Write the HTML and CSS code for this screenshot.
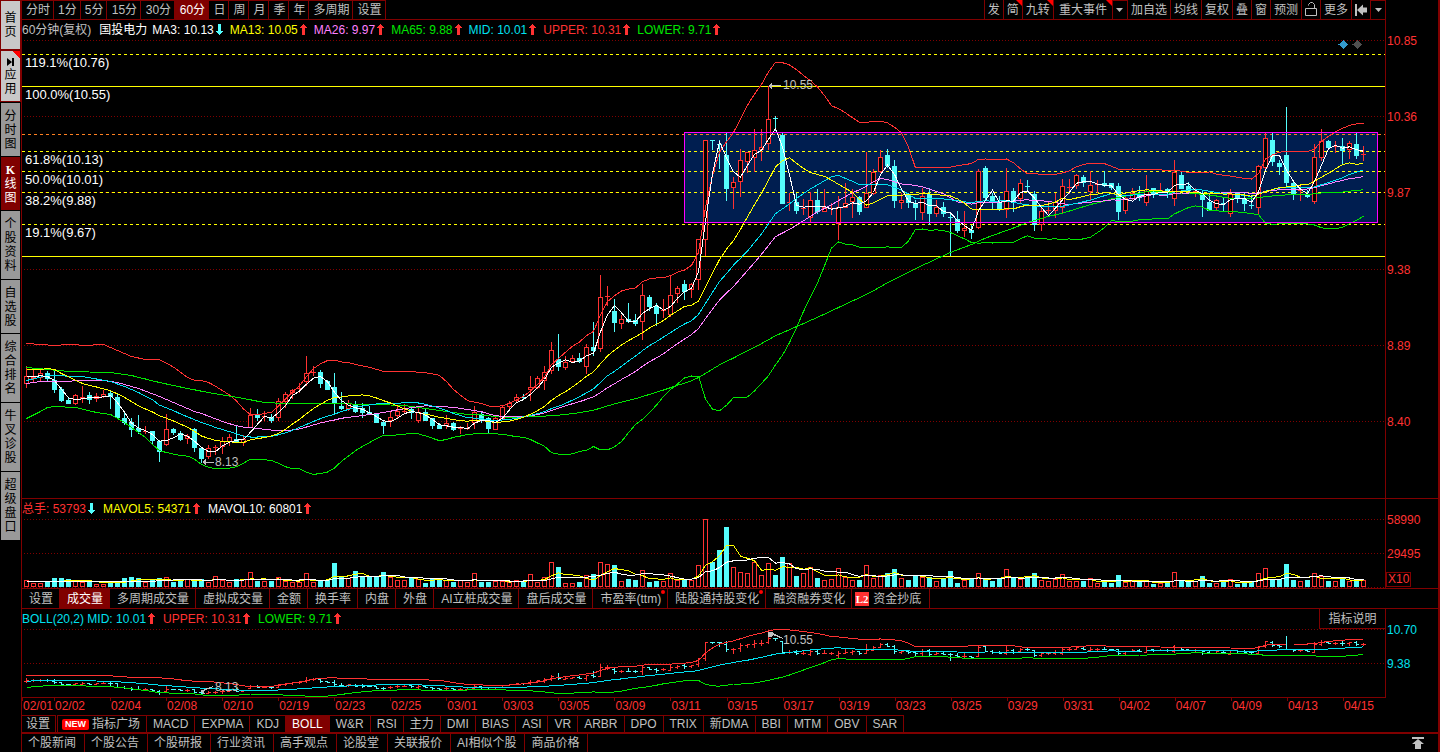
FILE: index.html
```html
<!DOCTYPE html>
<html lang="zh-CN">
<head>
<meta charset="utf-8">
<title>国投电力 60分钟K线</title>
<link rel="stylesheet" href="styles.css">
</head>
<body>
<svg class="sprite" aria-hidden="true">
  <symbol id="up" viewBox="0 0 7 11"><path d="M3 0h1v1h1v1h1v1h1v1H5v7H2V4H0V3h1V2h1V1h1z"/></symbol>
  <symbol id="down" viewBox="0 0 7 11"><path d="M2 0h3v7h2v1H6v1H5v1H4v1H3v-1H2V9H1V8H0V7h2z"/></symbol>
</svg>
<div class="app">
  <nav class="side">
    <button class="side-btn light home">首页</button>
    <button class="side-btn light apps"><svg class="play" viewBox="0 0 8 8"><path d="M0 0l5 4-5 4zM5 0h2v8H5z"/></svg>应用</button>
    <button class="side-btn">分时图</button>
    <button class="side-btn on"><b>K</b>线图</button>
    <button class="side-btn tall">个股资料</button>
    <button class="side-btn">自选股</button>
    <button class="side-btn tall">综合排名</button>
    <button class="side-btn tall">牛叉诊股</button>
    <button class="side-btn tall">超级盘口</button>
  </nav>
  <main class="main">
    <header class="toolbar">
      <div class="tabs periods">
        <button>分时</button><button>1分</button><button>5分</button><button class="two">15分</button><button class="two">30分</button><button class="two on">60分</button><button>日</button><button>周</button><button>月</button><button>季</button><button>年</button><button>多周期</button><button>设置</button>
      </div>
      <div class="tabs tools">
        <button>发</button><button class="flag">简</button><button class="flag">九转</button><button class="flag wide">重大事件</button><button class="drop" aria-label="展开事件"><svg viewBox="0 0 7 4"><path d="M0 0h7L3.500 4z"/></svg></button><button>加自选</button><button>均线</button><button>复权</button><button>叠</button><button>窗</button><button>预测</button><button aria-label="锁定"><svg class="lock" viewBox="0 0 12 15"><path d="M.5 6.500h11v7H.5zM3.500 3.500v-1l2-2h2l2 2v4" /></svg></button><button>更多</button><button aria-label="收起"><svg class="collapse" viewBox="0 0 12 12"><path d="M0 0h2v12H0zM2 6l6-5.500v3h4v5H8v3z"/></svg></button><button class="drop" aria-label="更多选项"><svg viewBox="0 0 7 4"><path d="M0 0h7L3.500 4z"/></svg></button>
      </div>
    </header>

    <section class="panel price">
      <div class="plot" id="price">
        <div class="legend">
          <span class="grey">60分钟(复权)</span><span class="white name">国投电力</span>
          <span class="white">MA3: 10.13<svg class="arrow dn"><use href="#down"/></svg></span>
          <span class="yellow">MA13: 10.05<svg class="arrow"><use href="#up"/></svg></span>
          <span class="pink">MA26: 9.97<svg class="arrow"><use href="#up"/></svg></span>
          <span class="green">MA65: 9.88<svg class="arrow"><use href="#up"/></svg></span>
          <span class="cyan">MID: 10.01<svg class="arrow"><use href="#up"/></svg></span>
          <span class="red">UPPER: 10.31<svg class="arrow"><use href="#up"/></svg></span>
          <span class="green">LOWER: 9.71<svg class="arrow"><use href="#up"/></svg></span>
        </div>
      </div>
      <div class="axis" id="priceAxis"></div>
    </section>

    <section class="panel volume">
      <div class="plot" id="volume">
        <div class="legend">
          <span class="red">总手: 53793<svg class="arrow dn"><use href="#down"/></svg></span>
          <span class="yellow">MAVOL5: 54371<svg class="arrow"><use href="#up"/></svg></span>
          <span class="white">MAVOL10: 60801<svg class="arrow"><use href="#up"/></svg></span>
        </div>
      </div>
      <div class="axis" id="volumeAxis"><span class="unit">X10</span></div>
    </section>

    <div class="tabs subs">
      <button>设置</button><button class="on">成交量</button><button>多周期成交量</button><button>虚拟成交量</button><button>金额</button><button>换手率</button><button>内盘</button><button>外盘</button><button>AI立桩成交量</button><button>盘后成交量</button><button class="dot">市盈率(ttm)</button><button class="dot">陆股通持股变化</button><button>融资融券变化</button><button class="level"><i>L2</i>资金抄底</button>
    </div>

    <section class="panel boll">
      <div class="plot" id="boll">
        <div class="legend">
          <span class="cyan">BOLL(20,2) MID: 10.01<svg class="arrow"><use href="#up"/></svg></span>
          <span class="red">UPPER: 10.31<svg class="arrow"><use href="#up"/></svg></span>
          <span class="green">LOWER: 9.71<svg class="arrow"><use href="#up"/></svg></span>
        </div>
        <button class="explain">指标说明</button>
      </div>
      <div class="axis cyan" id="bollAxis"></div>
    </section>

    <div class="panel">
      <div class="dates" id="dates"></div>
    </div>

    <div class="tabs indicators">
      <button class="setup">设置</button><button class="fresh"><i>NEW</i>指标广场</button><button>MACD</button><button>EXPMA</button><button>KDJ</button><button class="on">BOLL</button><button>W&amp;R</button><button>RSI</button><button>主力</button><button>DMI</button><button>BIAS</button><button>ASI</button><button>VR</button><button>ARBR</button><button>DPO</button><button>TRIX</button><button>新DMA</button><button>BBI</button><button>MTM</button><button>OBV</button><button>SAR</button>
    </div>
    <footer class="tabs links">
      <a href="#">个股新闻</a><a href="#">个股公告</a><a href="#">个股研报</a><a href="#">行业资讯</a><a href="#">高手观点</a><a href="#">论股堂</a><a href="#">关联报价</a><a href="#">AI相似个股</a><a href="#">商品价格</a>
      <button class="top" aria-label="置顶"><svg viewBox="0 0 12 12"><path d="M0 0h12v2H0zM6 2l6 5H9v5H3V7H0z"/></svg></button>
    </footer>
  </main>
</div>
<script src="chart.js"></script>
</body>
</html>
```
FILE: styles.css
```css
* { box-sizing: border-box; }
body {
  margin: 0;
  background: #000;
  color: #c0c0c0;
  font: 12px/16px "Liberation Sans", "Noto Sans CJK SC", sans-serif;
}
button { font: inherit; color: inherit; background: none; border: 0; padding: 0; margin: 0; cursor: pointer; }
a { color: inherit; text-decoration: none; }
i { font-style: normal; }
.sprite { position: absolute; width: 0; height: 0; }
.app { display: flex; height: 100vh; min-height: 540px; overflow: hidden; }

.side { flex: none; width: 22px; padding: 1px 1px 0; border-right: 1px solid #800000; display: flex; flex-direction: column; gap: 1px; }
.side-btn { height: 53px; padding: 0 3px; background: #999; color: #000; line-height: 14px; word-break: break-all; text-align: center; }
.side-btn.tall { height: 68px; }
.side-btn.light { background: #c8c8c8; outline: 1px solid #800000; }
.side-btn.home { height: 48px; margin-bottom: 1px; }
.side-btn.apps { height: 50px; margin-bottom: 1px; background: linear-gradient(225deg, #f00 5px, #c8c8c8 5px); }
.side-btn.on { background: #800000; color: #fff; }
.side-btn b { display: block; font-family: "Liberation Serif", serif; }
.play { display: block; width: 8px; height: 8px; margin: 2px auto; }

.main { flex: 1; min-width: 0; display: flex; flex-direction: column; border-right: 2px solid #800000; }
.tabs { display: flex; white-space: nowrap; flex: none; }
.tabs > button, .tabs > a { position: relative; flex: none; display: flex; align-items: center; justify-content: center; border-right: 1px solid #800000; }
.tabs > .on { background: #800000; color: #fff; }
.tabs svg { flex: none; }

.toolbar { flex: none; display: flex; justify-content: space-between; height: 20px; margin-right: 52px; border-bottom: 1px solid #800000; overflow: hidden; }
.periods { border-top: 1px solid #800000; }
.periods > button { padding: 0 3px 0 4px; }
.periods > .two { min-width: 34px; }
.tools { border-left: 1px solid #800000; }
.tools > button { padding: 0 3px; }
.tools > .wide { padding: 0 5px; }
.tools > .drop { width: 15px; border-top: 1px solid #800000; }
.drop svg { width: 7px; height: 4px; fill: #c0c0c0; }
.lock { width: 12px; height: 15px; fill: none; stroke: #c0c0c0; }
.collapse { width: 12px; height: 12px; fill: #c0c0c0; }
.flag::after { content: ""; position: absolute; top: 0; right: 0; border-top: 6px solid #f00; border-left: 6px solid transparent; }

.panel { flex: none; display: grid; grid-template-columns: minmax(0, 1fr) 52px; }
.plot { position: relative; border-right: 1px solid #800000; }
.axis { position: relative; color: #ff3232; }
.price { flex: 1; min-height: 0; border-bottom: 1px solid #800000; }
.volume { height: 89px; }
.boll { height: 88px; }
.chart { position: absolute; inset: 0; width: 100%; height: 100%; shape-rendering: crispEdges; }
.chart polyline { fill: none; }
.legend { position: relative; z-index: 1; display: flex; height: 20px; align-items: center; white-space: nowrap; }
.legend .name { margin: 0 5px 0 8px; }
.arrow { width: 7px; height: 11px; margin: 0 8px 0 2px; vertical-align: -1px; fill: #ff3232; }
.price .arrow { margin-right: 7px; }
.arrow.dn { fill: #54fcfc; }
.tag { position: absolute; transform: translateY(-50%); white-space: nowrap; }
.axis .tag { left: 1px; }
.level-tag { left: 3px; font-size: 13px; color: #fff; }
.unit { position: absolute; left: 0; bottom: 1px; padding: 0 1px; line-height: 13px; border: 1px solid #800000; }
.explain { position: absolute; z-index: 1; top: 0; right: 0; width: 66px; height: 20px; border: solid #800000; border-width: 0 0 1px 1px; background: #000; }

.grey { color: #c0c0c0; }
.white { color: #fff; }
.yellow { color: #ff0; }
.pink { color: #ff80ff; }
.green { color: #00e600; }
.cyan { color: #00e0f0; }
.red { color: #ff3232; }

.subs { height: 21px; border: solid #800000; border-width: 1px 0; }
.subs > button { padding: 0 6px 0 7px; }
.subs > .level { padding: 0 8px 0 3px; }
.level i { width: 14px; line-height: 14px; margin-right: 4px; background: #ff3232; color: #fff; font-family: "Liberation Serif", serif; font-weight: bold; font-size: 11px; text-align: center; }
.dot::after { content: ""; position: absolute; top: 1px; right: 2px; width: 4px; height: 4px; border-radius: 2px; background: #f00; }

.dates { height: 18px; display: grid; border-top: 1px solid #800000; color: #ff3232; }
.dates span { min-width: 0; padding-left: 1px; background: linear-gradient(#800000, #800000) 0 0 / 1px 3px no-repeat; white-space: nowrap; }

.indicators { height: 17px; }
.indicators > button { padding: 0 6px; border-top: 1px solid #800000; }
.indicators > .setup { padding: 0 5px 0 4px; margin-right: 1px; }
.indicators > .fresh { border-left: 1px solid #800000; padding: 0 6px 0 4px; }
.fresh i { width: 27px; line-height: 11px; margin-right: 3px; border-radius: 2px; background: #f00; color: #fff; font-size: 9px; font-weight: bold; text-align: center; }
.links { height: 20px; border-top: 2px solid #800000; }
.links > a { padding: 0 8px 0 6px; }
.links > .top { margin-left: auto; border: 0; padding-right: 14px; }
.top svg { width: 12px; height: 12px; fill: #c0c0c0; }
```
FILE: chart.js
```js
// Each bar: colour (r = rising, c = falling), high, body top, body bottom, low.
const bars = `r366 376 383 387,r369 377 378 382,r369 373 377 380,c371 373 378 380,c369 380 389 392,c387 389 400 401,c398 400 403 403,r394 395 403 404,r386 397 398 402,c392 395 399 403,r393 396 398 401,r390 394 396 397,c391 393 396 408,c394 397 417 418,c412 418 422 424,c418 422 429 436,c415 428 431 433,r426 431 431 433,c431 431 440 443,c440 441 451 461,
r414 429 444 445,c428 429 432 434,c431 433 439 440,r434 436 438 443,c428 429 447 451,c447 448 458 462,r445 448 456 458,r445 447 447 454,r437 441 446 453,r434 437 441 445,c426 439 441 442,r435 439 442 445,r408 415 427 427,c409 414 417 420,r411 416 416 420,c414 417 420 422,r398 401 417 420,r392 394 401 407,r389 390 392 398,r383 388 388 392,
r356 373 381 385,r366 372 372 375,c370 372 383 387,c380 381 389 389,c373 387 403 414,c392 406 408 409,r400 403 408 410,c401 404 411 412,c403 408 412 417,c406 412 414 414,c413 414 422 422,c420 422 425 433,r412 417 420 426,r405 411 415 418,r404 411 411 413,c408 409 412 418,r408 412 420 422,c409 412 420 420,c418 418 425 428,c423 425 428 428,
r415 423 425 428,c422 423 429 430,r426 428 428 433,r423 428 428 429,r406 412 422 428,c411 414 420 422,c417 418 428 433,r417 418 429 429,r405 407 418 418,r401 403 406 409,r394 397 400 402,c394 397 397 399,r376 387 389 400,r376 378 387 388,r366 372 380 389,r342 350 370 373,c334 359 366 370,r356 362 367 369,r355 358 361 362,c353 358 361 362,
r344 347 366 373,c322 347 350 355,r275 297 348 351,r286 296 296 305,c299 311 322 331,r315 319 323 328,c303 319 321 322,c314 320 323 325,r284 295 321 339,c295 297 306 310,c303 306 313 325,r299 310 310 317,r275 295 314 316,r286 288 293 302,c280 284 291 299,r283 284 289 297,r239 239 279 289,r140 140 239 255,c140 140 140 149,c140 144 144 168,
c133 155 188 200,r177 182 187 208,r149 160 181 196,r152 152 161 172,r129 150 157 171,r129 147 149 160,r86 119 143 149,c116 118 118 130,c133 135 203 203,r193 202 202 210,c193 202 210 213,r199 208 208 214,r192 200 217 222,c189 200 211 213,r189 207 211 211,r203 208 208 214,r196 207 223 239,r183 203 207 207,r189 197 201 217,c196 197 211 214,
r152 193 207 207,r169 172 193 194,r150 157 171 172,c149 155 165 167,c160 166 200 207,r193 200 202 208,c193 195 202 207,c200 203 207 219,r188 196 212 219,c188 194 213 224,r200 207 213 216,c202 207 213 216,c212 217 217 255,c211 219 230 232,r211 228 230 236,c225 230 232 238,r169 171 227 228,c166 168 197 200,c193 196 201 208,c196 202 209 210,
r168 191 209 217,c188 191 202 211,r179 183 198 203,c180 186 186 189,c191 194 224 230,r207 211 224 230,r202 210 210 213,r193 202 210 217,r179 186 207 213,r179 187 187 193,r174 175 185 188,c175 177 182 186,r171 185 191 200,r180 184 184 192,c171 183 185 186,c183 183 187 189,c183 186 211 219,r196 198 210 213,r188 193 198 199,c186 194 197 200,
r175 191 202 205,c188 188 194 197,r183 190 190 192,c188 189 192 197,r160 172 198 205,c172 175 188 188,c182 186 190 192,r188 191 191 196,c191 194 199 216,c196 202 210 210,r199 200 207 209,c197 203 203 210,r189 194 213 216,c193 193 197 202,c192 198 203 210,c195 205 205 208,r165 166 207 214,r133 138 167 170,c133 140 161 165,c160 163 166 174,
c107 155 182 187,c182 183 194 199,r186 190 190 200,c190 194 196 197,r144 157 201 203,r129 141 157 160,c140 141 147 149,r141 146 146 152,c138 146 150 163,r141 143 149 158,c133 144 155 158,r146 154 154 160`
  .split(",").map(s => {
    s = s.trim();
    const [high, top, bottom, low] = s.slice(1).split(" ").map(Number);
    const rising = s[0] === "r";
    return { rising, high, top, bottom, low, close: rising ? top : bottom, open: rising ? bottom : top };
  });

const volumes = [7,4,4,5,9,9,8,6,5,7,3,3,5,6,9,10,9,5,7,9,10,5,6,8,8,8,5,11,7,5,8,8,15,6,6,6,10,6,5,5,
14,5,7,7,24,11,9,16,10,10,10,15,10,7,7,10,8,4,8,9,7,5,7,5,14,5,5,6,6,5,7,5,13,5,10,25,20,4,4,5,
12,13,25,23,22,6,8,7,17,5,6,6,14,7,7,7,22,68,25,37,60,20,15,14,25,12,24,12,30,24,11,14,20,9,7,8,19,10,7,7,
22,9,12,14,18,9,7,12,10,10,6,8,16,4,7,8,14,8,6,9,18,10,8,9,14,7,6,8,13,6,6,6,9,4,6,4,12,5,6,6,
6,3,4,5,15,6,6,6,11,4,4,6,8,3,5,5,14,19,8,8,23,7,6,7,14,11,6,6,9,6,6,7];

const RED = "#ff3232", AQUA = "#54fcfc", CYAN = "#00e0f0", YELLOW = "#ffff00", GREEN = "#00e600", PINK = "#ff80ff", DARK = "#800000";
const LEFT = 22, WIDTH = 1363, STEP = 7;
const x = i => 26 + STEP * i;

// Values for the bars whose averaging window starts before the first bar.
const lead = anchors => i => {
  let k = 1;
  while (k < anchors.length - 1 && anchors[k][0] < i) k++;
  const [a, b] = [anchors[k - 1], anchors[k]];
  return a[1] + (b[1] - a[1]) * (i - a[0]) / (b[0] - a[0]);
};
const average = (list, n, before) => list.map((_, i) => {
  if (i < n - 1) return before(i);
  return list.slice(i - n + 1, i + 1).reduce((s, v) => s + v, 0) / n;
});
const closes = bars.map(b => b.close);
const ma3 = average(closes, 3, () => 376);
const ma13 = average(closes, 13, lead([[0,369],[2,369],[3,368],[4,369],[5,373],[8,383],[12,390]]));
const ma26 = average(closes, 26, lead([[0,383],[2,381],[11,380],[13,382],[16,388],[19,396],[24,411]]));
const ma65 = average(closes, 65, lead([[0,367],[3,369],[6,371],[12,372],[15,375],[19,382],[23,388],[26,392],[31,398],[34,402],[37,403],[43,403],[50,404],[54,405],[56,407],[60,411],[64,415]]));
const mid = average(closes, 20, lead([[0,380],[3,375],[8,376],[12,381],[14,386],[16,392],[19,403]]));
const spread = i => {
  const part = closes.slice(i - 19, i + 1);
  return 2 * Math.sqrt(part.reduce((s, v) => s + (v - mid[i]) ** 2, 0) / 19);
};
const upperLead = lead([[0,343],[2,344],[4,345],[6,344],[9,345],[10,344],[11,344],[13,350],[15,356],[17,359],[19,360]]);
const lowerLead = lead([[0,418],[2,411],[3,407],[4,406],[7,407],[10,412],[12,414],[14,422],[17,437],[19,451]]);
const upper = mid.map((m, i) => i < 19 ? upperLead(i) : m - spread(i));
const lower = mid.map((m, i) => i < 19 ? lowerLead(i) : m + spread(i));

const rect = (px, py, w, h, fill, stroke) => `<rect x="${px}" y="${py}" width="${w}" height="${h}" fill="${fill}"${stroke ? ` stroke="${stroke}"` : ""}/>`;
const rule = (y, colour, dash) => `<line x1="${dash === "1 2" ? 24 : LEFT}" x2="1385" y1="${y + 0.5}" y2="${y + 0.5}" stroke="${colour}"${dash ? ` stroke-dasharray="${dash}"` : ""}/>`;
const curve = (values, colour, map = v => v) => `<polyline stroke="${colour}" points="${values.map((v, i) => `${x(i) + 0.5},${(map(v) + 0.5).toFixed(1)}`).join(" ")}"/>`;
const mount = (id, top, height, body) => document.getElementById(id).insertAdjacentHTML("afterbegin",
  `<svg class="chart" viewBox="${LEFT} ${top} ${WIDTH} ${height}" preserveAspectRatio="none">${body}</svg>`);
const tag = (id, text, y, top, height, cls = "", px) => document.getElementById(id).insertAdjacentHTML("beforeend",
  `<span class="tag ${cls}" style="top:${((y - top) / height * 100).toFixed(2)}%${px ? `;left:${((px - LEFT) / WIDTH * 100).toFixed(2)}%` : ""}">${text}</span>`);

// Price
let g = [40, 116, 192, 269, 345, 421].map(y => rule(y, DARK, "1 2")).join("");
g += rect(684.5, 132.5, 693, 90, "#001e50", "none");
g += [54, 151, 171, 192, 224].map(y => rule(y, YELLOW, "3 3")).join("") + rule(134, "#ff8020", "3 3");
g += rule(86, YELLOW) + rule(256, YELLOW);
bars.forEach((b, i) => {
  const c = b.rising ? RED : AQUA, cx = x(i);
  g += rect(cx, b.high, 1, b.low - b.high + 1, c);
  if (b.bottom - b.top < 2) g += rect(cx - 2, b.top, 5, b.bottom - b.top + 1, c);
  else if (b.rising) g += rect(cx - 1.5, b.top + 0.5, 4, b.bottom - b.top, "#000", RED);
  else g += rect(cx - 2, b.top, 5, b.bottom - b.top + 1, c);
});
g += curve(upper, RED) + curve(lower, GREEN) + curve(ma65, GREEN) + curve(ma26, PINK) + curve(mid, CYAN) + curve(ma13, YELLOW) + curve(ma3, "#fff");
g += rect(684.5, 132.5, 693, 90, "none", "#ff00ff");
g += `<path d="M768 86l4-3v2h9v1h-9v3zM202 462l4-3v3h8v1h-8v2z" fill="#c0c0c0"/>`;
g += `<path d="M1343.500 40l5 4.500-5 4.500-5-4.500z" fill="#3399cc"/><path d="M1357.500 40l5 4.500-5 4.500-5-4.500z" fill="#505050"/>`;
mount("price", 20, 478, g);
[["119.1%(10.76)", 63], ["100.0%(10.55)", 95], ["61.8%(10.13)", 160], ["50.0%(10.01)", 180], ["38.2%(9.88)", 201], ["19.1%(9.67)", 233]]
  .forEach(([t, y]) => tag("price", t, y, 20, 478, "level-tag"));
tag("price", "10.55", 85, 20, 478, "grey", 783);
tag("price", "8.13", 462, 20, 478, "grey", 215);
[["10.85", 41], ["10.36", 117], ["9.87", 193], ["9.38", 270], ["8.89", 346], ["8.40", 422]]
  .forEach(([t, y]) => tag("priceAxis", t, y, 20, 478));

// Volume
g = [519, 553, 587].map(y => rule(y, DARK, "1 2")).join("");
volumes.forEach((v, i) => {
  g += bars[i].rising ? rect(x(i) - 1.5, 587 - v + 0.5, 4, v - 1, "#000", RED) : rect(x(i) - 2, 587 - v, 5, v, AQUA);
});
const volumeY = v => 587 - v;
g += curve(average(volumes, 5, () => 6), YELLOW, volumeY) + curve(average(volumes, 10, () => 6), "#fff", volumeY);
mount("volume", 499, 89, g);
tag("volumeAxis", "58990", 520, 499, 89);
tag("volumeAxis", "29495", 554, 499, 89);

// BOLL
const small = v => 629 + (v - 62) * 0.1626;
g = [629, 663].map(y => rule(y, DARK, "1 2")).join("");
bars.forEach((b, i) => {
  const c = b.rising ? RED : AQUA, r = v => Math.round(small(v)), cx = x(i);
  g += rect(cx, r(b.high), 1, r(b.low) - r(b.high) + 1, c) + rect(cx - 2, r(b.open), 2, 1, c) + rect(cx + 1, r(b.close), 2, 1, c);
});
g += curve(upper, RED, small) + curve(mid, CYAN, small) + curve(lower, GREEN, small);
g += `<path d="M768 632h5v1l10 5v1l-10-4-2 2h-3zM200 691l13-5v1l-9 4 1 3h-2z" fill="#c0c0c0"/>`;
mount("boll", 609, 88, g);
tag("boll", "10.55", 640, 609, 88, "grey", 783);
tag("boll", "8.13", 687, 609, 88, "grey", 215);
tag("bollAxis", "10.70", 630, 609, 88);
tag("bollAxis", "9.38", 664, 609, 88);

// Dates
const days = "02/01 02/02 02/04 02/08 02/10 02/19 02/23 02/25 03/01 03/03 03/05 03/09 03/11 03/15 03/17 03/19 03/23 03/25 03/29 03/31 04/02 04/07 04/09 04/13 04/15".split(" ");
const dates = document.getElementById("dates");
dates.style.gridTemplateColumns = days.map((_, i) => i === 0 ? "32fr" : i === days.length - 1 ? "43fr" : "56fr").join(" ");
dates.innerHTML = days.map(d => `<span>${d}</span>`).join("");
```
